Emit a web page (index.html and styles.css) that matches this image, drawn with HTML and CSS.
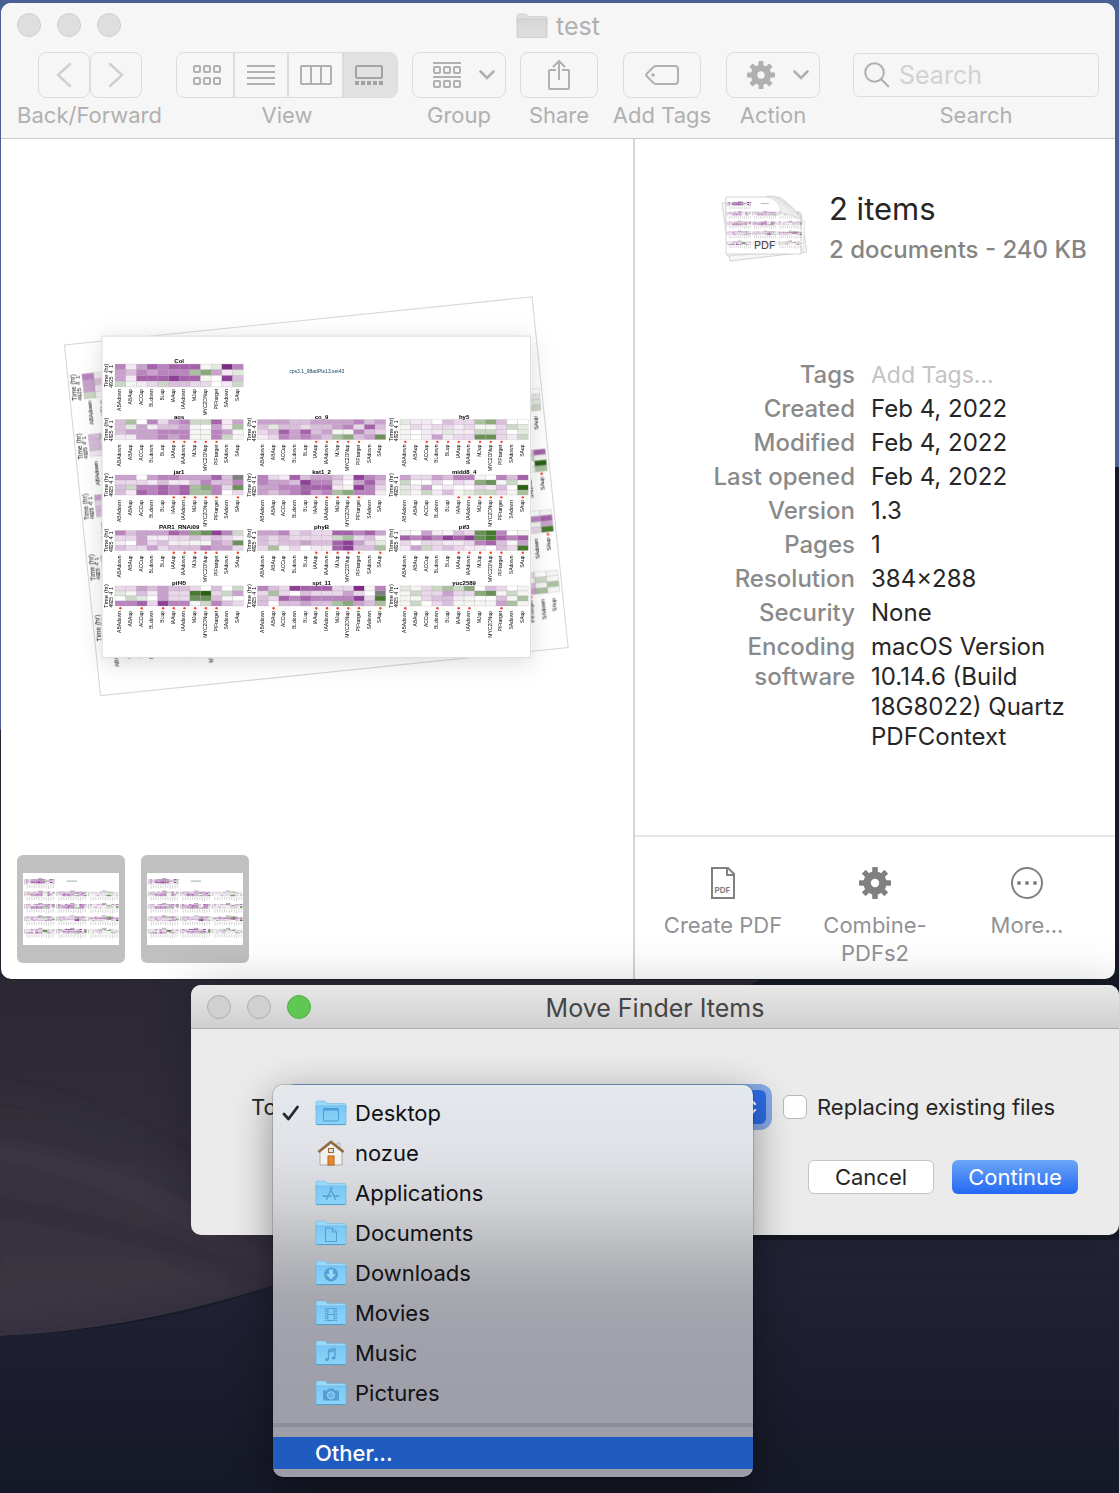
FILE: index.html
```html
<!DOCTYPE html>
<html lang="en">
<head>
<meta charset="utf-8">
<meta name="viewport" content="width=device-width, initial-scale=1">
<title>test</title>
<link rel="stylesheet" href="styles.css">
</head>
<body>
<svg class="defs" width="0" height="0" aria-hidden="true">
  <defs>
    <g id="cells"></g>
    <g id="labels"></g>
    <g id="ticks"></g>
    <linearGradient id="folderFill" x1="0" y1="0" x2="0" y2="1"><stop offset="0" stop-color="#7bc8f5"/><stop offset="1" stop-color="#8bd3f8"/></linearGradient>
    <linearGradient id="greyFill" x1="0" y1="0" x2="0" y2="1"><stop offset="0" stop-color="#d6d6d6"/><stop offset="1" stop-color="#dedede"/></linearGradient>
    <linearGradient id="curl" x1="0" y1="1" x2="1" y2="0"><stop offset="0" stop-color="#fff"/><stop offset="0.5" stop-color="#eee"/><stop offset="1" stop-color="#bbb"/></linearGradient>
    <symbol id="gear" viewBox="0 0 32 32">
      <circle cx="16" cy="16" r="7.9" fill="none" stroke="currentColor" stroke-width="7.4"/>
      <g fill="currentColor">
        <rect x="13.2" y="0" width="5.6" height="8" rx="1"/><rect x="13.2" y="24" width="5.6" height="8" rx="1"/>
        <rect x="0" y="13.2" width="8" height="5.6" rx="1"/><rect x="24" y="13.2" width="8" height="5.6" rx="1"/>
        <g transform="rotate(45 16 16)"><rect x="13.2" y="0" width="5.6" height="8" rx="1"/><rect x="13.2" y="24" width="5.6" height="8" rx="1"/><rect x="0" y="13.2" width="8" height="5.6" rx="1"/><rect x="24" y="13.2" width="8" height="5.6" rx="1"/></g>
      </g>
    </symbol>
    <symbol id="folder" viewBox="0 0 32 28">
      <path d="M1 3.5Q1 2 2.500 2H9.500Q10.500 2 11.200 3L12.200 4.500H29.500Q31 4.500 31 6V12H1Z" fill="#9bd8f8" stroke="#6fb9e2" stroke-width=".6"/>
      <path d="M1 7H31V24.500Q31 25.500 30 25.500H2Q1 25.500 1 24.500Z" fill="url(#folderFill)" stroke="#62aedb" stroke-width=".6"/>
      <path d="M1.500 25.600H30.500" stroke="#4f9ccc"/>
    </symbol>
    <symbol id="chevron" viewBox="0 0 16 10"><path d="M1.500 1.500L8 8L14.500 1.500" fill="none" stroke="currentColor" stroke-width="2.6" stroke-linecap="round"/></symbol>
  </defs>
</svg>

<svg class="wallpaper" viewBox="0 0 1119 1493" preserveAspectRatio="none" aria-hidden="true">
  <defs>
    <linearGradient id="night" x1="0" y1="0" x2="1" y2="1"><stop offset="0" stop-color="#2a2735"/><stop offset="1" stop-color="#131724"/></linearGradient>
    <linearGradient id="duneA" x1="0" y1="0" x2="0" y2="1"><stop offset="0" stop-color="#2b2834"/><stop offset="1" stop-color="#37323f"/></linearGradient>
    <linearGradient id="duneB" x1="0" y1="0" x2="0" y2="1"><stop offset="0" stop-color="#302c38"/><stop offset="1" stop-color="#3c3643"/></linearGradient>
    <linearGradient id="low" x1="0" y1="0" x2="0" y2="1"><stop offset="0" stop-color="#222436"/><stop offset="1" stop-color="#151827"/></linearGradient>
    <filter id="haze"><feGaussianBlur stdDeviation="9"/></filter>
  </defs>
  <rect width="1119" height="1493" fill="#161927"/>
  <path d="M0 0H1119V467H400L0 730Z" fill="#4a6095"/>
  <path d="M0 730L400 800L700 975L330 1240L0 1200Z" fill="url(#night)"/>
  <path d="M0 980H760Q560 1080 290 1280Q140 1330 0 1336Z" fill="url(#duneA)"/>
  <g filter="url(#haze)">
    <path d="M-20 1090Q90 1100 190 1170L290 1262Q130 1310 -20 1318Z" fill="url(#duneB)"/>
    <path d="M-20 1205Q110 1220 250 1275" fill="none" stroke="#2f2b37" stroke-width="10"/>
    <path d="M-20 1150Q100 1160 220 1235" fill="none" stroke="#423b48" stroke-width="10"/>
  </g>
  <path d="M0 1336Q150 1332 290 1280L500 1240H1119V1493H0Z" fill="url(#low)"/>
</svg>

<main class="desktop">
  <section class="finder" aria-label="test">
    <header class="finder-head">
      <div class="titlebar">
        <div class="lights"><button class="light" aria-label="Close"></button><button class="light" aria-label="Minimize"></button><button class="light" aria-label="Zoom"></button></div>
        <h1 class="title title-muted">
          <svg width="32" height="28" viewBox="0 0 32 28" aria-hidden="true"><path d="M1 3.500Q1 2 2.500 2H9.500Q10.500 2 11.200 3L12.200 4.500H29.500Q31 4.500 31 6V12H1Z" fill="#dedede" stroke="#c8c8c8" stroke-width=".6"/><path d="M1 7H31V24.500Q31 25.500 30 25.500H2Q1 25.500 1 24.500Z" fill="url(#greyFill)" stroke="#c4c4c4" stroke-width=".7"/></svg>
          <span>test</span>
        </h1>
      </div>
      <div class="toolbar">
        <div class="tool tool-nav">
          <div class="tool-row nav-icons">
            <button class="btn btn-nav" aria-label="Back"><svg width="16" height="26" viewBox="0 0 16 26"><path d="M14 2L2 13L14 24" fill="none" stroke="currentColor" stroke-width="2.400" stroke-linecap="round"/></svg></button>
            <button class="btn btn-nav" aria-label="Forward"><svg width="16" height="26" viewBox="0 0 16 26"><path d="M2 2L14 13L2 24" fill="none" stroke="currentColor" stroke-width="2.400" stroke-linecap="round"/></svg></button>
          </div>
          <span class="tool-label">Back/Forward</span>
        </div>
        <div class="tool tool-view">
          <div class="segments">
            <button class="segment" aria-label="Icons"><svg width="28" height="22" viewBox="0 0 28 22" fill="none" stroke="currentColor" stroke-width="2"><rect x="1" y="2" width="6" height="6" rx="1"/><rect x="11" y="2" width="6" height="6" rx="1"/><rect x="21" y="2" width="6" height="6" rx="1"/><rect x="1" y="14" width="6" height="6" rx="1"/><rect x="11" y="14" width="6" height="6" rx="1"/><rect x="21" y="14" width="6" height="6" rx="1"/></svg></button>
            <button class="segment" aria-label="List"><svg width="28" height="22" viewBox="0 0 28 22" stroke="currentColor" stroke-width="2"><path d="M0 2H28M0 8H28M0 14H28M0 20H28"/></svg></button>
            <button class="segment" aria-label="Columns"><svg width="32" height="22" viewBox="0 0 32 22" fill="none" stroke="currentColor" stroke-width="2"><rect x="1" y="2" width="30" height="18" rx="1"/><path d="M11 2V20M21 2V20"/></svg></button>
            <button class="segment segment-on" aria-label="Gallery" aria-pressed="true"><svg width="28" height="22" viewBox="0 0 28 22" fill="none" stroke="currentColor" stroke-width="2"><rect x="1" y="2" width="26" height="12" rx="1"/><path d="M0 19H28" stroke-width="4" stroke-dasharray="4 2"/></svg></button>
          </div>
          <span class="tool-label">View</span>
        </div>
        <div class="tool tool-wide">
          <button class="btn btn-menu" aria-label="Group"><svg width="28" height="28" viewBox="0 0 28 28" fill="none" stroke="currentColor" stroke-width="2"><path d="M0 2H28M0 16H28"/><rect x="1" y="6" width="6" height="6" rx="1"/><rect x="11" y="6" width="6" height="6" rx="1"/><rect x="21" y="6" width="6" height="6" rx="1"/><rect x="1" y="20" width="6" height="6" rx="1"/><rect x="11" y="20" width="6" height="6" rx="1"/><rect x="21" y="20" width="6" height="6" rx="1"/></svg><svg class="chev" width="16" height="10"><use href="#chevron"/></svg></button>
          <span class="tool-label">Group</span>
        </div>
        <div class="tool tool-share">
          <button class="btn btn-one" aria-label="Share"><svg width="24" height="32" viewBox="0 0 24 32" fill="none" stroke="currentColor" stroke-width="2"><path d="M9 11H3Q2 11 2 12V29Q2 30 3 30H21Q22 30 22 29V12Q22 11 21 11H15M12 21V2M6 8L12 2L18 8"/></svg></button>
          <span class="tool-label">Share</span>
        </div>
        <div class="tool tool-tags">
          <button class="btn btn-one" aria-label="Add Tags"><svg width="34" height="22" viewBox="0 0 34 22" fill="none" stroke="currentColor" stroke-width="2"><path d="M11 2H30Q33 2 33 5V17Q33 20 30 20H11Q9 20 7.500 18L2 12.500Q.5 11 2 9.500L7.500 4Q9 2 11 2Z"/><circle cx="8" cy="11" r="1.800" fill="currentColor" stroke="none"/></svg></button>
          <span class="tool-label">Add Tags</span>
        </div>
        <div class="tool tool-wide">
          <button class="btn btn-menu" aria-label="Action"><svg width="28" height="28"><use href="#gear"/></svg><svg class="chev" width="16" height="10"><use href="#chevron"/></svg></button>
          <span class="tool-label">Action</span>
        </div>
        <div class="tool tool-search">
          <div class="search-box">
            <svg width="26" height="26" viewBox="0 0 26 26" fill="none" stroke="currentColor" stroke-width="2" aria-hidden="true"><circle cx="10.500" cy="10.500" r="9.300"/><path d="M17 17L25 25"/></svg>
            <input id="search" class="search-input" type="text" placeholder="Search">
          </div>
          <label class="tool-label" for="search">Search</label>
        </div>
      </div>
    </header>
    <div class="finder-body">
      <div class="gallery">
        <div class="stage">
          <svg class="stack" viewBox="65 296 505 401" role="img" aria-label="Preview of two documents">
            <defs>
              <filter id="soft"><feGaussianBlur stdDeviation=".7"/></filter>
              <filter id="drop" x="-20%" y="-20%" width="140%" height="150%"><feDropShadow dx="0" dy="4" stdDeviation="12" flood-opacity=".15"/></filter>
              <clipPath id="around"><path clip-rule="evenodd" d="M0 0H700V900H0ZM103 336V657H531V336Z"/></clipPath>
            </defs>
            <g clip-path="url(#around)"><g transform="translate(317 496) rotate(-5.870) scale(1.097) translate(-214 -160.500)">
              <rect width="428" height="321" fill="#fff" stroke="#d8d8d8"/>
              <g filter="url(#soft)"><use href="#cells"/><use href="#labels"/></g>
            </g></g>
            <rect x="103" y="336" width="428" height="321" fill="#fff" stroke="#dadada" filter="url(#drop)"/>
            <g transform="translate(103 336)" filter="url(#soft)"><use href="#cells"/><use href="#labels"/></g>
          </svg>
        </div>
        <div class="thumbs">
          <button class="thumb" aria-label="First document"><svg viewBox="0 0 428 321"><rect width="428" height="321" fill="#fff"/><use href="#cells"/><use href="#ticks"/></svg></button>
          <button class="thumb" aria-label="Second document"><svg viewBox="0 0 428 321"><rect width="428" height="321" fill="#fff"/><use href="#cells"/><use href="#ticks"/></svg></button>
        </div>
      </div>
      <aside class="details">
        <div class="info">
          <div class="summary">
            <svg width="86" height="68" viewBox="0 0 86 68" aria-hidden="true">
              <path d="M1 9L48 4L80 20L86 58L9 67Z" fill="#f6f6f6" stroke="#c9c9c9" stroke-width=".8"/>
              <path d="M5 4L60 3L84 28L82 56L6 62Z" fill="#fafafa" stroke="#d2d2d2" stroke-width=".7"/>
              <path d="M5 3H50Q56 4 60 10Q64 19 80 25V60H5Z" fill="#fff" stroke="#c9c9c9" stroke-width=".8"/>
              <g transform="translate(5 3) scale(.178)"><use href="#cells"/><use href="#ticks"/></g>
              <path d="M46 2Q54 1 60 5Q76 14 82 29Q74 20 60 19Q61 9 46 2Z" fill="url(#curl)" stroke="#c4c4c4" stroke-width=".5"/>
              <rect x="31" y="46" width="26" height="10" fill="#fff" opacity=".7"/>
              <text x="33" y="55" class="pdf-tag">PDF</text>
            </svg>
            <div>
              <h2 class="count">2 items</h2>
              <p class="size">2 documents - 240 KB</p>
            </div>
          </div>
          <dl class="meta">
            <dt><label for="tags">Tags</label></dt><dd><input id="tags" class="tags-input" type="text" placeholder="Add Tags..."></dd>
            <dt>Created</dt><dd>Feb 4, 2022</dd>
            <dt>Modified</dt><dd>Feb 4, 2022</dd>
            <dt>Last opened</dt><dd>Feb 4, 2022</dd>
            <dt>Version</dt><dd>1.3</dd>
            <dt>Pages</dt><dd>1</dd>
            <dt>Resolution</dt><dd>384×288</dd>
            <dt>Security</dt><dd>None</dd>
            <dt>Encoding software</dt><dd>macOS Version 10.14.6 (Build 18G8022) Quartz PDFContext</dd>
          </dl>
        </div>
        <div class="quick">
          <button class="quick-btn"><svg width="32" height="32" viewBox="0 0 32 32" fill="none" stroke="#808080" stroke-width="2"><path d="M5 1H21L27 7V31H5ZM20 1V8H27"/><text x="7.500" y="26" class="pdf-small">PDF</text></svg><span>Create PDF</span></button>
          <button class="quick-btn"><svg class="grey" width="32" height="32"><use href="#gear"/></svg><span>Combine-<br>PDFs2</span></button>
          <button class="quick-btn"><svg width="32" height="32" viewBox="0 0 32 32"><circle cx="16" cy="16" r="15" fill="none" stroke="#808080" stroke-width="2"/><g fill="#808080"><circle cx="8" cy="16" r="2"/><circle cx="16" cy="16" r="2"/><circle cx="24" cy="16" r="2"/></g></svg><span>More...</span></button>
        </div>
      </aside>
    </div>
  </section>

  <section class="dialog" role="dialog" aria-label="Move Finder Items">
    <header class="titlebar dialog-bar">
      <div class="lights"><button class="light light-dim" aria-label="Close"></button><button class="light light-dim" aria-label="Minimize"></button><button class="light light-green" aria-label="Zoom"></button></div>
      <h2 class="title">Move Finder Items</h2>
    </header>
    <form class="move-form">
      <div class="move-row">
        <label for="target">To:</label>
        <span class="popup">
          <select id="target" class="popup-select"><option>Desktop</option></select>
          <svg class="popup-arrows" width="14" height="22" viewBox="0 0 14 22" fill="none" stroke="#fff" stroke-width="2.400" stroke-linecap="round" aria-hidden="true"><path d="M2 8L7 3L12 8M2 14L7 19L12 14"/></svg>
        </span>
        <label class="check"><input type="checkbox" class="check-box">Replacing existing files</label>
      </div>
      <div class="buttons">
        <button type="button" class="push">Cancel</button>
        <button type="button" class="push push-main">Continue</button>
      </div>
    </form>
    <div class="menu" role="menu">
      <button class="item" role="menuitem"><svg class="tick" height="18" viewBox="0 0 18 18" preserveAspectRatio="xMinYMid"><path d="M2 10L6.500 15L15.500 3" fill="none" stroke="#24272b" stroke-width="2.800" stroke-linecap="round" stroke-linejoin="round"/></svg><svg width="32" height="28" viewBox="0 0 32 28"><use href="#folder"/><g fill="none" stroke="#4a9ed6"><rect x="8.500" y="9.500" width="15" height="12.500" rx="1"/><path d="M8.500 10.500H23.500" stroke-width="2"/></g></svg>Desktop</button>
      <button class="item" role="menuitem"><span class="tick"></span><svg width="32" height="28" viewBox="0 0 32 28"><path d="M22 4H25V10L22 8Z" fill="#ddd" stroke="#aaa" stroke-width=".6"/><path d="M5 12L16 3L27 12V26H5Z" fill="#f3f1ef" stroke="#9c9a98" stroke-width=".8"/><path d="M3.500 13L16 3L28.500 13" fill="none" stroke="#8f6a42" stroke-width="2.800"/><rect x="13.500" y="9.500" width="5" height="4" fill="#cfe3ef" stroke="#a86426"/><rect x="13" y="17" width="6" height="9" fill="#e8892c" stroke="#b5651c"/></svg>nozue</button>
      <button class="item" role="menuitem"><span class="tick"></span><svg width="32" height="28" viewBox="0 0 32 28"><use href="#folder"/><path d="M17 9L11.500 20.500M15 9L20.500 20.500M8 17H16M19 17H24" fill="none" stroke="#539fd3" stroke-width="1.300" stroke-linecap="round"/></svg>Applications</button>
      <button class="item" role="menuitem"><span class="tick"></span><svg width="32" height="28" viewBox="0 0 32 28"><use href="#folder"/><path d="M10.500 9H17.500L21.500 13V22.500H10.500ZM17.500 9V13H21.500" fill="none" stroke="#539fd3"/></svg>Documents</button>
      <button class="item" role="menuitem"><span class="tick"></span><svg width="32" height="28" viewBox="0 0 32 28"><use href="#folder"/><circle cx="16" cy="15.500" r="7" fill="#539fd3"/><path d="M14 10.500H18V15H21L16 20.500L11 15H14Z" fill="#9bd8f8"/></svg>Downloads</button>
      <button class="item" role="menuitem"><span class="tick"></span><svg width="32" height="28" viewBox="0 0 32 28"><use href="#folder"/><g fill="none" stroke="#539fd3"><path d="M13 9.500H19M13 15.500H19M13 21.500H19M12.800 9V22M19.200 9V22"/><path d="M10.800 9V22M21.200 9V22" stroke-width="1.800" stroke-dasharray="1.400 1"/></g></svg>Movies</button>
      <button class="item" role="menuitem"><span class="tick"></span><svg width="32" height="28" viewBox="0 0 32 28"><use href="#folder"/><path d="M13.500 20V11L20 9.500V18.500M13.500 12.800L20 11.300" fill="none" stroke="#539fd3" stroke-width="1.300"/><ellipse cx="12" cy="20.500" rx="2" ry="1.600" fill="#539fd3"/><ellipse cx="18.500" cy="19" rx="2" ry="1.600" fill="#539fd3"/></svg>Music</button>
      <button class="item" role="menuitem"><span class="tick"></span><svg width="32" height="28" viewBox="0 0 32 28"><use href="#folder"/><path d="M8 11.500H12L13.500 9.500H18.500L20 11.500H24V21.500H8Z" fill="#539fd3"/><circle cx="16" cy="16.300" r="3.600" fill="#6db7e6" stroke="#9bd8f8"/></svg>Pictures</button>
      <hr class="rule">
      <button class="item item-on" role="menuitem">Other...</button>
    </div>
  </section>
</main>
<script src="charts.js"></script>
</body>
</html>
```
FILE: styles.css
```css
* { box-sizing: border-box; }

body {
  margin: 0;
  min-height: 100vh;
  position: relative;
  background: #161927;
  color: #262626;
  font-family: Inter, "Liberation Sans", sans-serif;
  font-size: 22px;
  line-height: 30px;
}

button, input, select { font: inherit; color: inherit; margin: 0; padding: 0; border: 0; background: none; }
h1, h2, p, dl, dd { margin: 0; font-weight: 400; }
svg { display: block; flex: none; }

.defs { position: absolute; }
.wallpaper { position: absolute; inset: 0; width: 100%; height: 100%; }

.desktop { position: relative; min-height: 100vh; padding-top: 3px; }

/* Finder window */
.finder {
  margin: 0 4px 0 1px;
  border-radius: 10px;
  overflow: hidden;
  background: #fff;
}
.finder-head { background: #f6f6f6; border-bottom: 1px solid #c9c9c9; color: #b0b0b0; }

.titlebar {
  display: grid;
  grid-template-columns: 1fr auto 1fr;
  align-items: center;
  height: 44px;
  padding: 0 16px;
}
.lights { display: flex; gap: 16px; }
.light { width: 24px; height: 24px; border-radius: 50%; background: #dedede; border: 1px solid #cdcdcd; }
.light-dim { background: #d0d0d0; border-color: #adadad; }
.light-green { background: #60c754; border-color: #4fae43; }
.title { display: flex; align-items: center; gap: 8px; padding-top: 2px; font-size: 25px; line-height: 32px; color: #454545; }
.title-muted { color: #b0b0b0; }

.toolbar { display: flex; gap: 14px; padding: 5px 16px 9px; }
.tool { display: flex; flex-direction: column; align-items: center; gap: 3px; flex: none; }
.tool-row { display: flex; }
.tool-label { font-size: 22px; line-height: 28px; white-space: nowrap; }
.tool-nav { width: 145px; }
.tool-view { width: 222px; }
.tool-wide { width: 94px; }
.tool-share { width: 78px; }
.tool-tags { width: 100px; }
.tool-search { flex: 1; min-width: 0; margin-left: 19px; }

.btn {
  display: flex;
  align-items: center;
  justify-content: center;
  height: 46px;
  border: 1px solid #dcdcdc;
  border-radius: 8px;
}
.btn-nav { width: 52px; color: #cfcfcf; }
.btn-menu { width: 94px; gap: 18px; padding-left: 10px; }
.btn-one { width: 78px; }

.segments { display: grid; grid-template-columns: 58px 54px 55px 55px; height: 46px; border: 1px solid #dcdcdc; border-radius: 8px; overflow: hidden; width: 100%; }
.segment { display: flex; align-items: center; justify-content: center; border-right: 2px solid #dcdcdc; }
.segment:first-child { padding-left: 4px; }
.segment-on { padding-right: 6px; background: #e1e1e1; border: 0; color: #a3a3a3; }

.search-box {
  display: flex;
  align-items: center;
  gap: 9px;
  width: 100%;
  height: 44px;
  margin: 1px 0;
  padding: 0 10px;
  border: 1px solid #dcdcdc;
  border-radius: 6px;
}
.search-input { flex: 1; min-width: 0; font-size: 25px; height: 32px; outline: 0; }
.search-input::placeholder { color: #d2d2d2; opacity: 1; }

.finder-body { display: grid; grid-template-columns: minmax(0, 1fr) 482px; min-height: 840px; }

.gallery { display: flex; flex-direction: column; }
.stage { flex: 1; display: flex; align-items: center; justify-content: center; }
.stack { width: 80%; height: auto; overflow: visible; }
.thumbs { display: flex; gap: 16px; padding: 0 16px 16px; }
.thumb { width: 108px; height: 108px; padding: 0 6px; border-radius: 6px; background: #c0c0c0; }
.thumb svg { width: 100%; }

.chart-title { font: bold 6px "Liberation Sans", sans-serif; fill: #000; text-anchor: middle; }
.chart-label { font: 5px "Liberation Sans", sans-serif; fill: #000; text-anchor: end; }
.chart-axis { font: 6px "Liberation Sans", sans-serif; fill: #000; text-anchor: middle; }
.chart-name { font: 5px "Liberation Sans", sans-serif; fill: #10425c; }

.details { display: flex; flex-direction: column; border-left: 2px solid #d4d4d4; }
.info { flex: 1; padding: 51px 24px 24px 60px; }
.summary { display: flex; align-items: center; gap: 22px; margin: 0 0 94px 26px; white-space: nowrap; }
.count { font-size: 31px; line-height: 38px; }
.size { margin-top: 6px; font-size: 24px; line-height: 32px; font-weight: 500; color: #858585; }
.pdf-tag { font: 11px Inter, sans-serif; fill: #444; }
.pdf-small { font: bold 8px Inter, sans-serif; fill: #808080; stroke: none; }

.meta { display: grid; grid-template-columns: 160px minmax(0, 1fr); gap: 4px 16px; font-size: 24px; }
.meta dt { text-align: right; font-weight: 500; color: #8a8a8a; }
.meta dd { max-width: 210px; }
.tags-input { display: block; width: 100%; height: 30px; font-size: 23px; outline: 0; }
.tags-input::placeholder { color: #c3c3c3; opacity: 1; }

.quick {
  display: grid;
  grid-template-columns: repeat(3, 1fr);
  align-items: start;
  padding: 30px 12px 12px;
  border-top: 2px solid #e5e5e5;
}
.quick-btn { display: flex; flex-direction: column; align-items: center; gap: 12px; line-height: 28px; color: #929296; }
.grey { color: #808080; }

/* Move dialog */
.dialog {
  position: relative;
  margin: 6px 0 0 191px;
  border-radius: 10px;
  background: #ebebeb;
  box-shadow: 0 0 50px rgba(0, 0, 0, .2);
}
.dialog-bar { border-radius: 10px 10px 0 0; background: linear-gradient(#e8e8e8, #cfcfcf); border-bottom: 1px solid #adadad; }
.move-form { padding: 61px 41px 41px 60px; }
.move-row { display: flex; align-items: center; height: 34px; }
.popup { position: relative; width: 477px; margin-left: 6px; }
.popup-select {
  display: block;
  appearance: none;
  width: 100%;
  height: 34px;
  padding-left: 48px;
  border-radius: 6px;
  background: linear-gradient(90deg, transparent calc(100% - 32px), #2d6ce6 0), #fff;
  box-shadow: 0 0 0 6px #86a9e6;
}
.popup-arrows { position: absolute; right: 9px; top: 6px; }
.check { display: flex; align-items: center; gap: 10px; margin-left: 17px; white-space: nowrap; }
.check-box { appearance: none; width: 24px; height: 24px; border: 1px solid #b8b8b8; border-radius: 6px; background: #fff; }
.buttons { display: flex; justify-content: flex-end; gap: 18px; margin-top: 36px; }
.push { width: 126px; height: 34px; border-radius: 6px; background: #fff; border: 1px solid #c4c4c4; line-height: 30px; }
.push-main { border: 0; background: linear-gradient(#6ba6f8, #2468f2); color: #fff; }

.menu {
  position: absolute;
  left: 82px;
  top: 100px;
  width: 480px;
  padding: 8px 0;
  border-radius: 10px;
  background: linear-gradient(#e4e9ee, #dfe1e6 18%, #d0d1d5 31%, #b8b9bd 43%, #a5a6ae 55%, #9fa0aa 70%, #9c9da7);
  box-shadow: 0 0 0 1px rgba(0, 0, 0, .15), 0 10px 40px rgba(0, 0, 0, .4);
  color: #101114;
}
.item { display: flex; align-items: center; gap: 8px; width: 100%; height: 40px; padding-left: 9px; text-align: left; }
.tick { width: 25px; }
.rule { height: 4px; margin: 10px 0; border: 0; background: #8d8e98; }
.item-on { height: 32px; padding-left: 42px; background: #205cc0; color: #fff; font-weight: 500; }
```
FILE: charts.js
```js
// Expression heatmaps: one character per cell, letters purple, digits green.
const palette = {
  ".": "#fff", a: "#f3eaf3", b: "#e8d8e9", c: "#d9bfdc", d: "#c9a1cd", e: "#b983be", f: "#a562ab", g: "#8d3f96", h: "#7b2a84",
  1: "#f3f6f1", 2: "#e2e9df", 3: "#cbd8c5", 4: "#a9c19f", 5: "#8aaa7c", 6: "#6b9159", 7: "#447a2c", 8: "#2b6113", x: "#808080"
};
const columns = ["ABAdown", "ABAup", "ACCup", "BLdown", "BLup", "IAAup", "IAAdown", "MJup", "MYC2DNup", "PIFtarget", "SAdown", "SAup"];
const charts = [
  ["Col", 0, 0, "eadfefff12he1 dcedeee45da2 dafffgff1.gc3 31ab3ccbb.a3", []],
  ["aos", 0, 1, "c4.ebde33fad c2daccd1.da4 cdddeee11ed1 aaddede11e31", [5, 6, 7, 8, 9]],
  ["co_9", 1, 1, "dddccddddecd c2ccbccdebfc bcfdfcd11ecb abededc45cd6", [5, 6, 7, 8, 9]],
  ["hy5", 2, 1, "2aa.cbb45c.. 1babbab11b32 1.aa2aa33b.2 1.adabb66ba3", [0, 2, 3, 4, 5, 6, 7, 8, 9]],
  ["jar1", 0, 2, "dd.deedddfcx bbbacaacecce c3eefef45eb6 cafefef44e.b", [5, 6, 7, 8, 9, 11]],
  ["kat1_2", 1, 2, "ebafcddcaged eddcgeeb.dfc ddeefffa1geb dcdefde45eea", [5, 6, 7, 8, 9]],
  ["midd8_4", 2, 2, "dbbdcee1.ecf 3..b.ba56131 2ad.a..bac.8 213ac1233b14", [5, 6, 7, 8, 9, 11]],
  ["PAR1_RNAi09", 0, 3, "ecdddfe56ge3 bbdaabbcbcba a.dbcaa11dc6 cbbdbccceddb", [5, 6, 7, 8, 9, 11]],
  ["phyB", 1, 3, "ddebcbbffefd cbcbbbb34bc1 cbccdccfgdb2 b41b.aafgcc4", [5, 6, 7, 8, 9, 11]],
  ["pif3", 2, 3, "1.da1cb67e.1 fefegfg67fef b.bbaabefc1d ad3bcbaa.cb7", [5, 6, 7, 8, 9, 11]],
  ["pif45", 0, 4, "bbdcdccb.c.3 21cadbb78b3d .32.dbb66c1. eefbgee13ecb", [0, 2, 4, 5, 6, 7, 8, 9]],
  ["spt_11", 1, 4, "ecbgfffbbh1e b4b.cbbbdb.x cbfefeeeegb7 c.ccdcc45dc4", [1, 5, 6, 7, 8, 9, 11]],
  ["yuc2589", 2, 4, "21b3435.cb.1 13bbdbb56131 11bcca1..c14 13.bc1111d41", [0, 3, 5, 6, 9]]
];

let cells = "", labels = "", ticks = "";
for (const [name, col, row, data, marks] of charts) {
  const x = 13 + col * 142.3;
  const y = 28 + row * 55.4;
  const w = 10.67;
  const h = row ? 5 : 5.7;
  const bottom = y + 4 * h;
  data.split(" ").forEach((line, r) => {
    line.slice(0, 12).split("").forEach((key, c) => {
      cells += `<rect x="${x + c * w}" y="${y + r * h}" width="${w}" height="${h}" fill="${palette[key]}" stroke="#a89aa8" stroke-opacity=".45" stroke-width=".5"/>`;
    });
    labels += `<text class="chart-label" transform="translate(${x - 2} ${y + r * h + 1}) rotate(-90)">${["1", "4", "25", "49"][r]}</text>`;
  });
  labels += `<text class="chart-title" x="${x + 64}" y="${y - 1}">${name}</text>`;
  labels += `<text class="chart-axis" transform="translate(${x - 7} ${y + 2 * h}) rotate(-90)">Time (hr)</text>`;
  columns.forEach((label, c) => {
    const cx = x + (c + 0.5) * w;
    labels += `<text class="chart-label" transform="translate(${cx + 1} ${bottom + (row ? 5 : 2)}) rotate(-90)">${label}</text>`;
    ticks += `<rect x="${cx - 2}" y="${bottom + 4}" width="4" height="${8 + label.length}" fill="#777" opacity=".35"/>`;
  });
  for (const c of marks) labels += `<circle cx="${x + (c + 0.5) * w}" cy="${bottom + 2.3}" r="1.2" fill="#f5402c"/>`;
  ticks += `<rect x="${x - 9}" y="${y}" width="6" height="${4 * h}" fill="#777" opacity=".35"/><rect x="${x + 54}" y="${y - 5}" width="20" height="4" fill="#555" opacity=".5"/>`;
}
labels += `<text class="chart-name" x="187" y="37">cps3.1_98adPts13.set43</text>`;
ticks += `<rect x="195" y="34" width="46" height="4" fill="#40657a" opacity=".6"/>`;
document.getElementById("cells").innerHTML = cells;
document.getElementById("labels").innerHTML = labels;
document.getElementById("ticks").innerHTML = ticks;
```
